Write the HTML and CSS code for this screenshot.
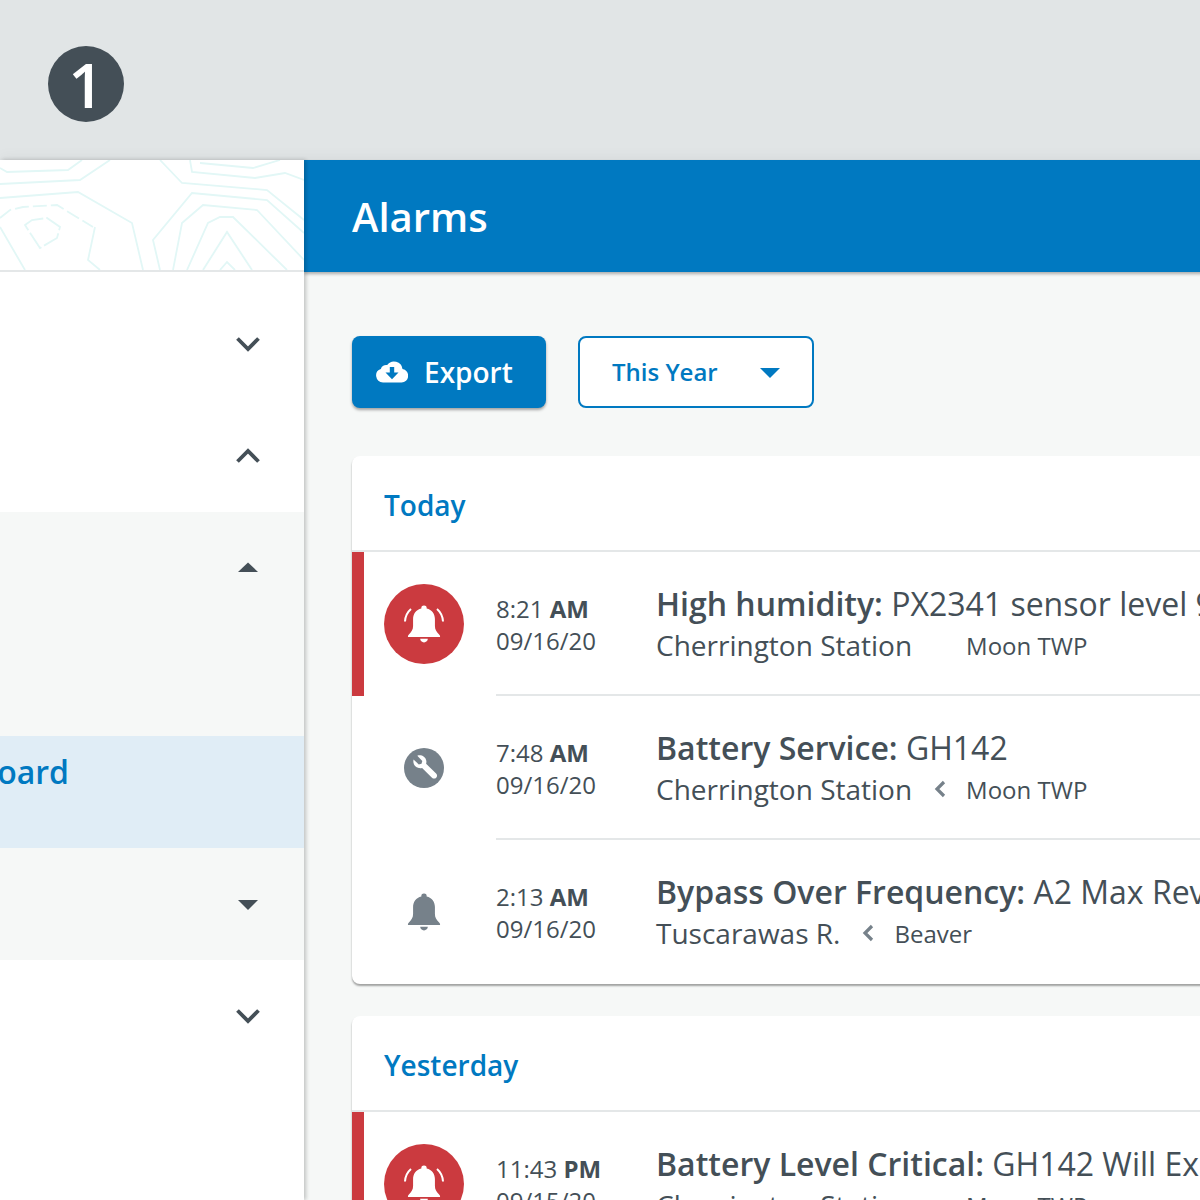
FILE: index.html
```html
<!DOCTYPE html>
<html lang="en">
<head>
<meta charset="utf-8">
<title>Alarms</title>
<link rel="stylesheet" href="styles.css">
</head>
<body>
<svg class="sprites" width="0" height="0" aria-hidden="true">
  <symbol id="bell" viewBox="0 0 40 44">
    <path d="M20 1.500a2.800 2.800 0 0 1 2.800 3c5.600 1.200 8.700 5.600 8.700 11.200v7.300c0 3.500 1.600 6.300 4.400 8.900.7.700 1.100 1.500 1.100 2.600H3c0-1.100.4-1.900 1.100-2.600 2.800-2.600 4.400-5.400 4.400-8.900v-7.300c0-5.600 3.100-10 8.700-11.200a2.800 2.800 0 0 1 2.800-3z"/>
    <path d="M16 36.500h8c0 2.300-1.800 3.800-4 3.800s-4-1.500-4-3.800z"/>
  </symbol>
  <symbol id="chev-left" viewBox="0 0 24 24"><path d="M16 5l-7 7 7 7" fill="none" stroke="currentColor" stroke-width="3.200"/></symbol>
  <symbol id="chev-down" viewBox="0 0 24 24"><path d="M1.500 6.500L12 17 22.500 6.500" fill="none" stroke="currentColor" stroke-width="3.800"/></symbol>
  <symbol id="chev-up" viewBox="0 0 24 24"><path d="M1.500 17.500L12 7l10.500 10.500" fill="none" stroke="currentColor" stroke-width="3.800"/></symbol>
  <symbol id="tri-up" viewBox="0 0 24 24"><path d="M2 16L12 6.500 22 16z" fill="currentColor"/></symbol>
  <symbol id="tri-down" viewBox="0 0 24 24"><path d="M2 8l10 10L22 8z" fill="currentColor"/></symbol>
</svg>

<div class="page">
  <header class="band"><span class="step">1</span></header>

  <div class="shell">
    <aside class="sidebar">
      <div class="side-top">
        <svg class="topo" viewBox="0 0 304 110" aria-hidden="true">
          <g fill="none" stroke="#e2f7f6" stroke-width="1.800">
            <path d="M0 8l7 4 61-2 14-10"/>
            <path d="M0 24l80-4 30-20"/>
            <path d="M0 38l78-6 54 31 11 47"/>
            <path d="M0 67l25 43"/>
            <path d="M95 67l-7 33 12 10"/>
            <path d="M160 0l22 23 85 7 37 30"/>
            <path d="M190 0l2 12 63 6 30-5 19 7"/>
            <path d="M200 3l53 5 27-8"/>
            <path d="M160 110l-7-30 39-47 75 7 37 33"/>
            <path d="M173 110l9-47 21-18 54 5 47 50"/>
            <path d="M187 110l21-47 12-6h13l54 53"/>
            <path d="M203 110l24-38 25 38"/>
            <path d="M220 110l7-8 8 8"/>
            <path d="M0 58l10-8 13-3 34-2 36 22" stroke-dasharray="14 4"/>
            <path d="M25 65l7-5 15-2 13 9-3 11-17 10z" stroke-dasharray="20 3"/>
          </g>
        </svg>
      </div>
      <nav class="side-nav">
        <div class="nav-row"><svg class="nav-ico"><use href="#chev-down"/></svg></div>
        <div class="nav-row"><svg class="nav-ico"><use href="#chev-up"/></svg></div>
        <div class="nav-row nav-row--open"><svg class="nav-ico"><use href="#tri-up"/></svg></div>
        <div class="nav-row nav-row--open"></div>
        <div class="nav-row nav-row--active"><span class="nav-label">Dashboard</span></div>
        <div class="nav-row nav-row--open"><svg class="nav-ico"><use href="#tri-down"/></svg></div>
        <div class="nav-row"><svg class="nav-ico"><use href="#chev-down"/></svg></div>
      </nav>
    </aside>

    <main class="main">
      <div class="titlebar"><h1 class="title">Alarms</h1></div>
      <div class="content">
        <div class="toolbar">
          <button class="btn-export">
            <svg class="cloud" viewBox="0 0 32 22" aria-hidden="true">
              <path fill="#fff" d="M7 21.500A7 7 0 0 1 4.800 7.900 5.500 5.500 0 0 1 11.200 4.100 8.500 8.500 0 0 1 26.500 8a6.800 6.800 0 0 1-1 13.500z"/>
              <path fill="#0079c1" d="M13.800 6h4.400v5.500h4.300L16 18.200l-6.500-6.700h4.300z"/>
            </svg>
            <span>Export</span>
          </button>
          <button class="btn-select">
            <span>This Year</span>
            <svg class="select-tri"><use href="#tri-down"/></svg>
          </button>
        </div>

        <section class="card">
          <h2 class="card-title">Today</h2>
          <div class="row row--alert">
            <div class="ico-cell"><span class="badge"><svg class="bell-ico"><use href="#bell"/></svg><svg class="rings" viewBox="0 0 40 40" aria-hidden="true"><path d="M1 19.500C1.300 14 3.500 10 7 7M39 19.500C38.700 14 36.500 10 33 7" fill="none" stroke="#fff" stroke-width="2"/></svg></span></div>
            <div class="body">
              <div class="time">8:21 <b>AM</b><br>09/16/20</div>
              <div class="info">
                <div class="headline"><b>High humidity:</b> PX2341 sensor level 95% exceeded threshold</div>
                <div class="place"><span>Cherrington Station</span><span class="sep"></span><span class="sub">Moon TWP</span></div>
              </div>
            </div>
          </div>
          <div class="row">
            <div class="ico-cell">
              <span class="wrench"><svg viewBox="0 0 40 40" aria-hidden="true"><circle cx="20" cy="20" r="20" fill="#76818a"/><path fill="#fff" d="M9.500 11.500l5.300 4.900 2.700-.7.800-2.700-5-5.300c4-1.200 8.200 1 9 5 .2 1.100.1 2.100-.2 3.100l10 9.700c1.200 1.200 1.300 3 .1 4.200-1.200 1.200-3 1.200-4.200 0l-9.900-9.800c-1 .3-2.100.4-3.200.2-4-.8-6.200-4.400-5.400-8.400z"/></svg></span>
            </div>
            <div class="body">
              <div class="time">7:48 <b>AM</b><br>09/16/20</div>
              <div class="info">
                <div class="headline"><b>Battery Service:</b> GH142</div>
                <div class="place"><span>Cherrington Station</span><svg class="sep"><use href="#chev-left"/></svg><span class="sub">Moon TWP</span></div>
              </div>
            </div>
          </div>
          <div class="row row--last">
            <div class="ico-cell"><svg class="bell-ico bell-ico--grey"><use href="#bell"/></svg></div>
            <div class="body">
              <div class="time">2:13 <b>AM</b><br>09/16/20</div>
              <div class="info">
                <div class="headline"><b>Bypass Over Frequency:</b> A2 Max Rev Limit Reached</div>
                <div class="place"><span>Tuscarawas R.</span><svg class="sep"><use href="#chev-left"/></svg><span class="sub">Beaver</span></div>
              </div>
            </div>
          </div>
        </section>

        <section class="card">
          <h2 class="card-title">Yesterday</h2>
          <div class="row row--alert">
            <div class="ico-cell"><span class="badge"><svg class="bell-ico"><use href="#bell"/></svg><svg class="rings" viewBox="0 0 40 40" aria-hidden="true"><path d="M1 19.500C1.300 14 3.500 10 7 7M39 19.500C38.700 14 36.500 10 33 7" fill="none" stroke="#fff" stroke-width="2"/></svg></span></div>
            <div class="body">
              <div class="time">11:43 <b>PM</b><br>09/15/20</div>
              <div class="info">
                <div class="headline"><b>Battery Level Critical:</b> GH142 Will Expire Soon</div>
                <div class="place"><span>Cherrington Station</span><span class="sep"></span><span class="sub">Moon TWP</span></div>
              </div>
            </div>
          </div>
        </section>
      </div>
    </main>
  </div>
</div>
</body>
</html>
```

FILE: styles.css
```css
* { box-sizing: border-box; }
html, body { margin: 0; padding: 0; }
body { font-family: "Open Sans", "Noto Sans", sans-serif; color: #444f57; background: #f6f8f7; }
.sprites { display: block; height: 0; }
.page { width: 1200px; height: 1200px; overflow: hidden; }

.band { height: 160px; background: #e1e5e6; padding: 46px 48px 0; }
.step {
  display: flex; align-items: center; justify-content: center;
  width: 76px; height: 76px; border-radius: 50%;
  background: #444f57; color: #fff;
  font-size: 62px; font-weight: 600; line-height: 1;
}

.shell { display: flex; width: 1900px; height: 1040px; box-shadow: 0 -2px 14px rgba(0, 0, 0, .05); }

.sidebar { flex: 0 0 304px; width: 304px; min-width: 0; background: #fff; box-shadow: 2px 0 4px rgba(0, 0, 0, .22); position: relative; z-index: 2; }
.side-top { height: 112px; border-bottom: 2px solid #e4e7e8; overflow: hidden; }
.topo { display: block; width: 304px; height: 110px; }
.side-nav { padding-top: 16px; }
.nav-row { height: 112px; display: flex; align-items: center; justify-content: flex-end; padding-right: 44px; color: #444f57; overflow: hidden; }
.nav-row--open { background: #f6f8f7; }
.nav-row--active { background: #e0edf6; align-items: flex-start; padding: 14px 235px 0 0; }
.nav-ico { width: 24px; height: 24px; flex: none; display: block; }
.nav-label { flex: none; color: #0079c1; font-size: 32px; line-height: 44px; font-weight: 600; white-space: nowrap; }

.main { flex: 1; min-width: 0; }
.titlebar { height: 112px; background: #0079c1; padding: 2px 48px 0; display: flex; align-items: center; box-shadow: 0 2px 3px rgba(0, 0, 0, .3); position: relative; }
.title { margin: 0; color: #fff; font-size: 40px; font-weight: 600; line-height: 56px; }

.content { padding: 64px 48px; }
.toolbar { display: flex; gap: 32px; margin-bottom: 48px; }
.btn-export {
  height: 72px; width: 194px; border: 0; border-radius: 8px; background: #0079c1; color: #fff;
  display: flex; align-items: center; gap: 16px; padding: 0 0 0 24px;
  font: 600 28px/40px "Open Sans", sans-serif;
  box-shadow: 0 2px 3px rgba(0, 0, 0, .35);
}
.cloud { width: 32px; height: 22px; display: block; }
.btn-select {
  height: 72px; width: 236px; border: 2px solid #0079c1; border-radius: 8px; background: #fff; color: #0079c1;
  display: flex; align-items: center; justify-content: space-between; padding: 0 30px 0 32px;
  font: 600 24px/32px "Open Sans", sans-serif;
}
.select-tri { width: 24px; height: 24px; display: block; }

.card { background: #fff; border-radius: 8px; margin-bottom: 32px; box-shadow: 0 2px 2px rgba(0, 0, 0, .35); overflow: hidden; }
.card-title { margin: 0; height: 96px; border-bottom: 2px solid #e4e7e8; padding: 29px 32px 0; color: #0079c1; font-size: 28px; line-height: 40px; font-weight: 600; }

.row { display: flex; height: 144px; padding-left: 32px; }
.row--alert { border-left: 12px solid #cb3a3f; padding-left: 20px; }
.ico-cell { flex: 0 0 80px; display: flex; align-items: center; justify-content: center; }
.badge { width: 80px; height: 80px; border-radius: 50%; background: #cb3a3f; color: #fff; display: flex; align-items: center; justify-content: center; position: relative; }
.bell-ico { width: 38px; height: 42px; margin-top: 2px; display: block; fill: #fff; }
.bell-ico--grey { fill: #76818a; }
.rings { position: absolute; left: 20px; top: 18px; width: 40px; height: 40px; }
.wrench { width: 40px; height: 40px; display: block; }
.wrench svg { display: block; width: 40px; height: 40px; }

.body { flex: 1; margin-left: 32px; border-bottom: 2px solid #e4e7e8; display: flex; }
.row--last .body { border-bottom: 0; }
.time { flex: 0 0 160px; padding-top: 41px; font-size: 24px; line-height: 32px; }
.time b { font-weight: 700; }
.info { padding-top: 32px; white-space: nowrap; }
.headline { font-size: 32px; line-height: 40px; }
.headline b { font-weight: 600; }
.place { display: flex; align-items: center; height: 42px; font-size: 28px; }
.sep { flex: 0 0 24px; width: 24px; height: 24px; margin: 0 14px 0 16px; color: #76818a; display: block; }
.sub { font-size: 24px; }
```
